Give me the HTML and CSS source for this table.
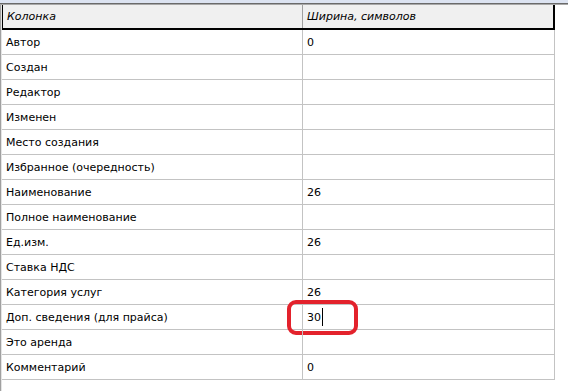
FILE: index.html
```html
<!DOCTYPE html>
<html>
<head>
<meta charset="utf-8">
<link rel="stylesheet" href="styles.css">
</head>
<body>
<div class="topstrip"></div>
<div class="topline"></div>
<div class="frame">
  <div class="grid">
    <div class="hrow">
      <div class="hcell c1">Колонка</div>
      <div class="hcell c2">Ширина, символов</div>
    </div>
    <div class="row"><div class="cell c1">Автор</div><div class="cell c2">0</div></div>
    <div class="row"><div class="cell c1">Создан</div><div class="cell c2"></div></div>
    <div class="row"><div class="cell c1">Редактор</div><div class="cell c2"></div></div>
    <div class="row"><div class="cell c1">Изменен</div><div class="cell c2"></div></div>
    <div class="row"><div class="cell c1">Место создания</div><div class="cell c2"></div></div>
    <div class="row"><div class="cell c1">Избранное (очередность)</div><div class="cell c2"></div></div>
    <div class="row"><div class="cell c1">Наименование</div><div class="cell c2">26</div></div>
    <div class="row"><div class="cell c1">Полное наименование</div><div class="cell c2"></div></div>
    <div class="row"><div class="cell c1">Ед.изм.</div><div class="cell c2">26</div></div>
    <div class="row"><div class="cell c1">Ставка НДС</div><div class="cell c2"></div></div>
    <div class="row"><div class="cell c1">Категория услуг</div><div class="cell c2">26</div></div>
    <div class="row"><div class="cell c1">Доп. сведения (для прайса)</div><div class="cell c2 editing"><span class="val">30</span><span class="caret"></span><span class="mark"></span></div></div>
    <div class="row"><div class="cell c1">Это аренда</div><div class="cell c2"></div></div>
    <div class="row"><div class="cell c1">Комментарий</div><div class="cell c2">0</div></div>
  </div>
</div>
</body>
</html>
```
FILE: styles.css
```css
html, body {
  margin: 0;
  padding: 0;
  background: #ffffff;
  width: 568px;
  height: 391px;
  overflow: hidden;
}
body {
  font-family: "DejaVu Sans", Verdana, sans-serif;
  font-size: 11px;
  color: #000;
}
.topstrip {
  height: 3px;
  background: #dce3f1;
}
.topline {
  height: 2px;
  background: linear-gradient(#6a6a6a 0 50%, #a8a8a8 50% 100%);
}
.frame {
  height: 386px;
  border-left: 1px solid #a0a0a0;
  box-shadow: inset 1px 0 0 #e4e4e4;
  padding-left: 1px;
}
.grid {
  width: 553px;
  display: flex;
  flex-direction: column;
}
.hrow {
  display: flex;
  height: 23px;
  background: #f0f0f0;
  border-left: 1px solid #000;
  border-right: 2px solid #000;
  border-bottom: 2px solid #000;
}
.hcell {
  font-style: italic;
  display: flex;
  align-items: center;
  padding-left: 4px;
  box-sizing: border-box;
}
.hrow .c1 {
  width: 300px;
  border-right: 1px solid #a0a0a0;
}
.hrow .c2 {
  flex: 1;
}
.row {
  display: flex;
  height: 24px;
  border-bottom: 1px solid #c3c3c3;
  border-right: 1px solid #c3c3c3;
  width: 552px;
}
.cell {
  display: flex;
  align-items: center;
  padding-left: 4px;
  box-sizing: border-box;
  position: relative;
}
.row .c1 {
  width: 301px;
  border-right: 1px solid #c3c3c3;
}
.row .c2 {
  flex: 1;
}
.caret {
  display: inline-block;
  width: 1px;
  height: 18px;
  background: #000;
  margin-left: 1px;
}
.mark {
  position: absolute;
  left: -16px;
  top: -5px;
  width: 63px;
  height: 27px;
  border: 4px solid #e3222c;
  border-radius: 9px;
}
```
